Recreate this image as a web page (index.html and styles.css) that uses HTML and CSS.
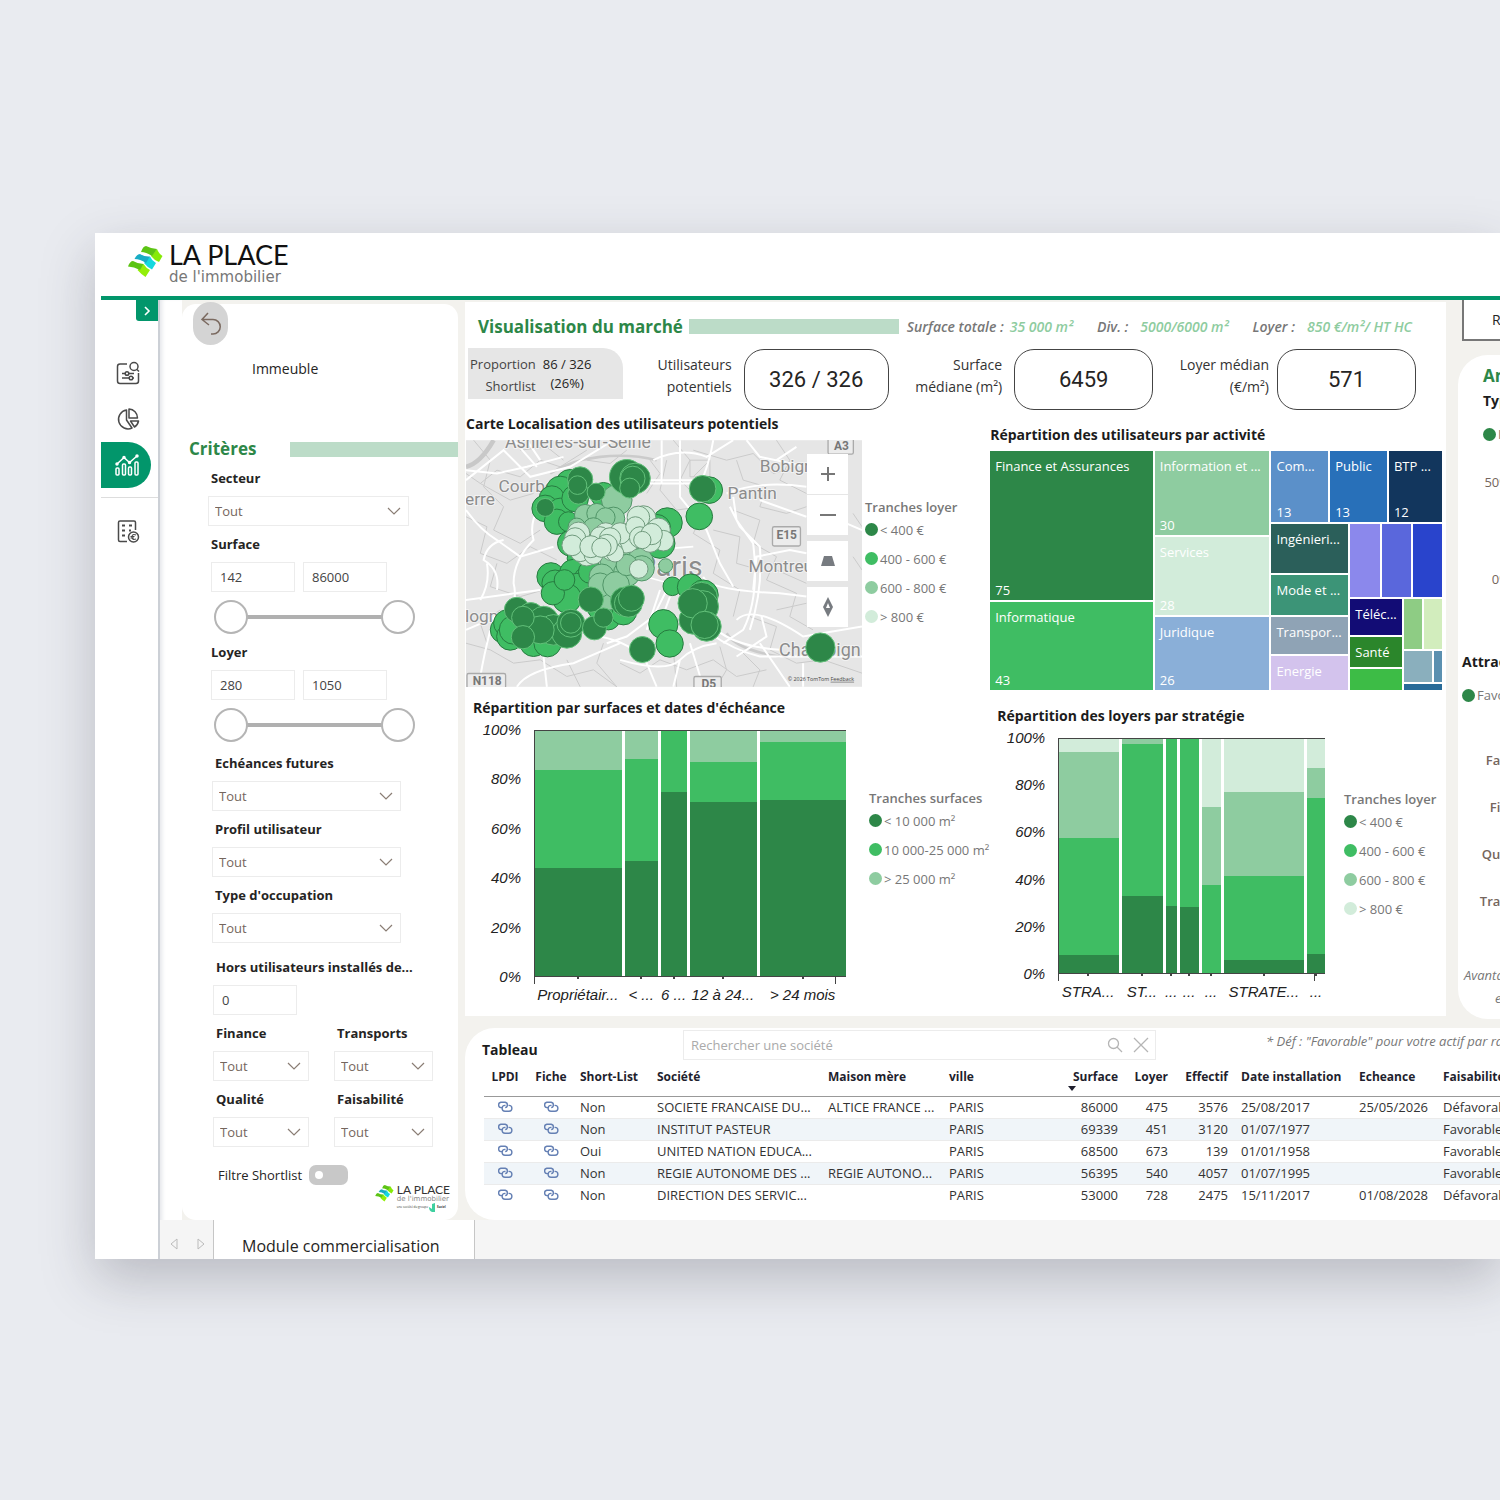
FILE: index.html
```html
<!DOCTYPE html>
<html lang="fr">
<head>
<meta charset="utf-8">
<meta name="viewport" content="width=device-width, initial-scale=1">
<title>La Place de l'immobilier - Module commercialisation</title>
<link rel="stylesheet" href="styles.css">
</head>
<body>
<svg class="defs" aria-hidden="true">
  <symbol id="mark" viewBox="0 0 35 32">
    <path d="M23 10L29 3Q31 8 34.500 10L31 16Q26 14 23 10Z" fill="#86ea08"/>
    <path d="M13 6Q15 0 18 0Q24 3 29 3L24 10Q18 6 13 6Z" fill="#5cc414"/>
    <path d="M16 17L22 10.500Q24 15 28 17L24 23.500Q19 21 16 17Z" fill="#14d8de"/>
    <path d="M6.500 13Q9 8 12 8Q17 11 22 10.500L18 17Q12 13 6.500 13Z" fill="#18acc4"/>
    <path d="M9.500 24L15.500 18Q18 22 22 24L17.500 31Q13 28 9.500 24Z" fill="#93ee08"/>
    <path d="M0 20.500Q2 15 5 15Q10 18 15.500 18L12 24Q6 20.500 0 20.500Z" fill="#5cc414"/>
  </symbol>
  <symbol id="chevron" viewBox="0 0 16 10"><path d="M2 2l6 6 6-6" fill="none" stroke="#8a7d74" stroke-width="1.2"/></symbol>
  <symbol id="link" viewBox="0 0 16 12">
    <g fill="none" stroke="#6580b4" stroke-width="1.400">
      <path d="M5 6.600H3.800A2.700 2.700 0 0 1 3.800 1.300H8.200A2.700 2.700 0 0 1 8.200 6.600"/>
      <path d="M11.500 4.400H12A2.900 2.900 0 0 1 12 10.200H8A2.900 2.900 0 0 1 8 4.400H8.500"/>
    </g>
  </symbol>
</svg>

<div class="window">
  <header class="header">
    <a class="logo" href="#">
      <svg class="logo-mark"><use href="#mark"/></svg>
      <span class="logo-text"><span class="logo-name">LA PLACE</span><span class="logo-tag">de l'immobilier</span></span>
    </a>
  </header>

  <div class="body">
    <nav class="rail">
      <button class="rail-toggle" aria-label="Déplier le menu"><svg width="8" height="12" viewBox="0 0 8 12"><path d="M2 2l4 4-4 4" fill="none" stroke="#fff" stroke-width="1.600"/></svg></button>
      <div class="rail-links">
        <a href="#" class="rail-link" aria-label="Recherche">
          <svg width="24" height="24" viewBox="0 0 24 24" fill="none" stroke="#4a4a4a" stroke-width="1.500"><path d="M11 3H4Q1.500 3 1.500 5.500V20Q1.500 22.500 4 22.500H20Q22.500 22.500 22.500 20V12"/><circle cx="18" cy="5.500" r="4"/><path d="M21 8.500l2 2M6 12.500h3m4 0h5M6 17h7m4 0h1"/><circle cx="11" cy="12.500" r="1.800"/><circle cx="15" cy="17" r="1.800"/></svg>
        </a>
        <a href="#" class="rail-link" aria-label="Statistiques">
          <svg width="24" height="24" viewBox="0 0 24 24" fill="none" stroke="#4a4a4a" stroke-width="1.500" stroke-linejoin="round"><path d="M10.500 3A9.500 9.500 0 1 0 16 21L10.500 13Z"/><path d="M13 2A9 9 0 0 1 21.500 11H13Z"/><path d="M14.500 14H22.500A9 9 0 0 1 18.500 20Z"/></svg>
        </a>
        <a href="#" class="rail-link active" aria-label="Marché">
          <svg width="24" height="24" viewBox="0 0 24 24" fill="none" stroke="#fff" stroke-width="1.500"><rect x="1" y="15" width="3" height="7" rx="1"/><rect x="7.500" y="11" width="3" height="11" rx="1"/><rect x="13.500" y="14" width="3" height="8" rx="1"/><rect x="20" y="9" width="3" height="13" rx="1"/><path d="M2 11L9 4.500L14.500 9.500L22 3"/><circle cx="2" cy="11" r="1" fill="#fff"/><circle cx="9" cy="4.500" r="1" fill="#fff"/><circle cx="14.500" cy="9.500" r="1" fill="#fff"/><circle cx="22" cy="3" r="1" fill="#fff"/></svg>
        </a>
        <hr class="rail-rule">
        <a href="#" class="rail-link" aria-label="Immeubles">
          <svg width="24" height="24" viewBox="0 0 24 24" fill="none" stroke="#4a4a4a" stroke-width="1.500"><path d="M19.500 11V3.500Q19.500 2 18 2H4Q2.500 2 2.500 3.500V21Q2.500 22.500 4 22.500H11"/><path d="M6 6.500h3m4 0h3M6 11.500h3m4 0h2M6 16.500h3" stroke-width="2"/><circle cx="17.500" cy="18" r="5"/><path d="M20 16Q16 14.500 16 18Q16 21.500 20 20M14.500 17.500h4M14.500 19h3.500" stroke-width="1.100"/></svg>
        </a>
      </div>
    </nav>

    <div class="content">
      <div class="canvas">
        <aside class="filters">
          <button class="undo" aria-label="Retour"><svg width="22" height="26" viewBox="0 0 22 26"><path d="M8 2L2 8.500L9 14M2 8.500H13A7 7 0 0 1 13 23H11" fill="none" stroke="#7b6a60" stroke-width="1.500"/></svg></button>
          <p class="asset">Immeuble</p>
          <div class="criteria"><h2 class="heading">Critères</h2><span class="band"></span></div>

          <div class="group group-a">
            <div class="field"><label for="f-sec">Secteur</label><span class="select"><select id="f-sec"><option>Tout</option></select><svg><use href="#chevron"/></svg></span></div>
            <div class="field">
              <label for="f-smin">Surface</label>
              <div class="pair"><input id="f-smin" value="142"><input aria-label="Surface maximale" value="86000"></div>
              <div class="range"><input type="range" min="142" max="86000" value="142" aria-label="Surface minimale"><input type="range" min="142" max="86000" value="86000" aria-label="Surface maximale"></div>
            </div>
            <div class="field">
              <label for="f-lmin">Loyer</label>
              <div class="pair"><input id="f-lmin" value="280"><input aria-label="Loyer maximal" value="1050"></div>
              <div class="range"><input type="range" min="280" max="1050" value="280" aria-label="Loyer minimal"><input type="range" min="280" max="1050" value="1050" aria-label="Loyer maximal"></div>
            </div>
          </div>

          <div class="group group-b">
            <div class="field"><label for="f-ech">Echéances futures</label><span class="select"><select id="f-ech"><option>Tout</option></select><svg><use href="#chevron"/></svg></span></div>
            <div class="field"><label for="f-pro">Profil utilisateur</label><span class="select"><select id="f-pro"><option>Tout</option></select><svg><use href="#chevron"/></svg></span></div>
            <div class="field"><label for="f-typ">Type d'occupation</label><span class="select"><select id="f-typ"><option>Tout</option></select><svg><use href="#chevron"/></svg></span></div>
          </div>

          <div class="group group-c">
            <div class="field wide"><label for="f-hor">Hors utilisateurs installés de...</label><div class="pair"><input id="f-hor" value="0"></div></div>
            <div class="field"><label for="f-fin">Finance</label><span class="select"><select id="f-fin"><option>Tout</option></select><svg><use href="#chevron"/></svg></span></div>
            <div class="field"><label for="f-tra">Transports</label><span class="select"><select id="f-tra"><option>Tout</option></select><svg><use href="#chevron"/></svg></span></div>
            <div class="field"><label for="f-qua">Qualité</label><span class="select"><select id="f-qua"><option>Tout</option></select><svg><use href="#chevron"/></svg></span></div>
            <div class="field"><label for="f-fai">Faisabilité</label><span class="select"><select id="f-fai"><option>Tout</option></select><svg><use href="#chevron"/></svg></span></div>
          </div>

          <div class="shortlist"><label for="f-short">Filtre Shortlist</label><input id="f-short" type="checkbox" class="switch"></div>

          <div class="mini-logo">
            <svg class="mini-mark"><use href="#mark"/></svg>
            <span class="mini-text"><span class="mini-name">LA PLACE</span><span class="mini-tag">de l'immobilier</span><span class="mini-group">une société du groupe<svg width="7" height="9" viewBox="0 0 7 9"><path d="M3 9V1L6 0V9ZM0 4l3 2v3Q0 8 0 4Z" fill="#3fd0a0"/></svg><b>Sociel</b></span></span>
          </div>
        </aside>

        <div class="stage">
          <div class="upper">
            <main class="panel">
              <div class="title-row">
                <h1 class="heading">Visualisation du marché</h1><span class="band"></span>
                <dl class="facts">
                  <div><dt>Surface totale :</dt><dd>35 000 m²</dd></div>
                  <div><dt>Div. :</dt><dd class="far">5000/6000 m²</dd></div>
                  <div><dt>Loyer :</dt><dd class="far">850 €/m²/ HT HC</dd></div>
                </dl>
              </div>

              <div class="kpis">
                <div class="proportion"><span class="prop-label">Proportion<br>Shortlist</span><span class="prop-value">86 / 326<br>(26%)</span></div>
                <div class="kpi"><span class="kpi-label">Utilisateurs<br>potentiels</span><output class="kpi-value broad">326 / 326</output></div>
                <div class="kpi"><span class="kpi-label">Surface<br>médiane (m²)</span><output class="kpi-value">6459</output></div>
                <div class="kpi tight"><span class="kpi-label">Loyer médian<br>(€/m²)</span><output class="kpi-value">571</output></div>
              </div>

              <div class="columns">
                <section class="col-left">
                  <h3>Carte Localisation des utilisateurs potentiels</h3>
                  <div class="viz-row map-row">
                    <div class="map">
                      <svg class="map-svg" viewBox="17 30 1190 741" role="img" aria-label="Carte de Paris">
                        <rect x="17" y="30" width="1190" height="741" fill="#e6e6e6"/>
                        <g fill="none" stroke="#cbcbcb" stroke-width="3">
                          <path d="M17 130L60 160L110 120L180 140L240 90L300 110L380 60M40 30L90 90L70 170L130 230L100 300L180 340L240 300M17 260L80 290L60 370L140 400L210 350L290 390M60 160L150 210L220 190M110 400L90 470L180 500L250 480M17 640L90 660L160 700L240 690L320 740L400 720L470 771"/>
                          <path d="M640 30L690 90L660 150L740 230L700 310L780 360L760 430L840 480L820 560M700 60L800 90L880 70L940 130L1010 110M620 90L600 180L650 240L720 230M820 240L900 270L880 340L950 380L920 450L1010 490L990 560L1060 600M760 300L840 320L830 400L900 420M870 560L950 590L930 660L1010 700L1090 690L1207 730"/>
                          <path d="M480 700L540 730L600 690L680 720L760 690L830 740L920 720M320 690L360 771M430 640L410 700L470 771M780 650L800 720L770 771M1180 250L1207 290M1180 380L1207 420M950 30L990 90L960 150L1040 190M830 90L850 150L920 170L900 230L980 250L1040 230M570 90L600 130L560 190M120 540L60 580L80 640M690 90h60v50h-60zM700 140l50-50M180 60L260 50L310 90M380 90L450 100L500 60M950 420L1040 460M950 540L1040 520M840 660L900 720L880 771M640 660L650 771M560 700L590 771"/>
                          <path d="M17 110Q60 100 100 30" stroke="#c8c8c8" stroke-width="14"/>
                          <path d="M270 130Q330 90 420 80T590 90" stroke-width="8"/><path d="M800 610Q830 660 960 680" stroke-width="8"/>
                        </g>
                        <g fill="none" stroke="#fff" stroke-width="6">
                          <path d="M17 240Q60 300 110 330L180 380L280 350M17 150L130 60L210 140L330 110L460 30M240 90L200 30M160 30L230 110M270 190Q200 260 220 330Q160 390 160 460Q180 540 100 560M17 120L110 130L200 110L310 80M80 400Q90 460 60 510M17 510L240 480M110 480Q120 420 70 390Q80 340 130 330"/>
                          <path d="M560 150H720M560 160H720M605 30V160M660 30V200L740 300L780 400L820 470M760 30Q750 90 730 140M580 90Q660 50 740 80L820 30M820 200L830 270L880 340Q900 500 850 600L790 640M810 230L840 290L900 350Q910 480 870 600M730 440Q740 480 960 490L1040 500M800 190Q900 150 1040 170M900 210L1040 260M880 480L890 380L990 360L1040 370"/>
                          <path d="M750 610Q820 660 900 680H1207M770 600Q830 650 960 660M770 640Q700 650 660 690T480 690M620 480L580 560L500 620L440 640M600 480L560 600M630 500L600 580M420 620Q520 640 560 700L590 771M250 680L260 771M90 600Q70 680 60 740M690 640L730 771M830 570Q880 520 1030 620L1207 590M905 560L920 620L830 680M1030 700V771M1207 300L1160 280M900 640L990 771M170 771Q200 720 340 700L480 640M860 30L900 80L1040 110M950 90L1010 50M17 600L110 560M660 690L640 771"/>
                          <path d="M440 200L640 410M330 380L700 350M520 430L700 480" stroke-width="5"/>
                        </g>
                        <g class="map-places">
                          <text x="134" y="53" font-size="53">Asnières-sur-Seine</text><text x="900" y="126" font-size="52">Bobigny</text>
                          <text x="115" y="187" font-size="52">Courbevoie</text><text x="14" y="226" font-size="52">erre</text><text x="803" y="208" font-size="52">Pantin</text>
                          <text x="535" y="437" font-size="85">Paris</text><text x="866" y="427" font-size="52">Montreuil</text><text x="14" y="577" font-size="52">logne</text><text x="958" y="678" font-size="54">Champign</text>
                        </g>
                        <g fill="#ececec" stroke="#aaa" stroke-width="4"><rect x="1105" y="10" width="76" height="62" rx="5"/><rect x="938" y="290" width="84" height="58" rx="5"/><rect x="20" y="731" width="116" height="60" rx="5"/><rect x="702" y="740" width="82" height="60" rx="5"/></g>
                        <g class="map-shields"><text x="1123" y="58">A3</text><text x="950" y="328">E15</text><text x="37" y="767">N118</text><text x="725" y="774">D5</text></g>
                        <g fill="#3fbd63" stroke="#267a3f" stroke-width="3">
                          <circle cx="330" cy="162" r="44"/><circle cx="300" cy="180" r="42"/><circle cx="275" cy="205" r="38"/><circle cx="255" cy="235" r="40"/><circle cx="300" cy="240" r="36"/><circle cx="290" cy="275" r="38"/><circle cx="345" cy="205" r="40"/><circle cx="325" cy="275" r="30"/><circle cx="430" cy="195" r="38"/><circle cx="410" cy="290" r="42"/>
                          <circle cx="622" cy="278" r="45"/><circle cx="590" cy="295" r="42"/><circle cx="600" cy="340" r="45"/><circle cx="330" cy="340" r="38"/><circle cx="355" cy="385" r="34"/><circle cx="272" cy="440" r="42"/><circle cx="285" cy="460" r="40"/><circle cx="340" cy="430" r="42"/><circle cx="380" cy="450" r="40"/><circle cx="350" cy="470" r="40"/><circle cx="320" cy="505" r="44"/><circle cx="278" cy="490" r="35"/><circle cx="313" cy="450" r="31"/><circle cx="390" cy="425" r="35"/>
                          <circle cx="748" cy="180" r="40"/><circle cx="718" cy="259" r="40"/><circle cx="637" cy="469" r="28"/><circle cx="692" cy="472" r="40"/><circle cx="730" cy="495" r="45"/><circle cx="610" cy="583" r="44"/><circle cx="629" cy="641" r="41"/>
                          <circle cx="130" cy="600" r="40"/><circle cx="140" cy="580" r="40"/><circle cx="150" cy="620" r="41"/><circle cx="160" cy="600" r="43"/><circle cx="220" cy="638" r="42"/><circle cx="262" cy="640" r="41"/><circle cx="445" cy="565" r="35"/><circle cx="490" cy="545" r="40"/><circle cx="420" cy="530" r="40"/>
                        </g>
                        <g fill="#8ecca0" stroke="#4f9466" stroke-width="3">
                          <circle cx="470" cy="210" r="46"/><circle cx="375" cy="255" r="32"/><circle cx="410" cy="250" r="30"/><circle cx="460" cy="265" r="34"/><circle cx="436" cy="262" r="29"/><circle cx="400" cy="295" r="32"/><circle cx="350" cy="290" r="26"/><circle cx="500" cy="380" r="40"/><circle cx="540" cy="395" r="40"/><circle cx="450" cy="400" r="30"/><circle cx="425" cy="440" r="38"/><circle cx="440" cy="500" r="42"/><circle cx="420" cy="465" r="36"/><circle cx="500" cy="430" r="40"/><circle cx="545" cy="415" r="38"/><circle cx="468" cy="465" r="40"/><circle cx="617" cy="407" r="21"/><circle cx="500" cy="405" r="32"/>
                        </g>
                        <g fill="#d2ecda" stroke="#6f9a7c" stroke-width="3">
                          <circle cx="550" cy="265" r="38"/><circle cx="535" cy="262" r="34"/><circle cx="355" cy="310" r="34"/><circle cx="345" cy="325" r="32"/><circle cx="437" cy="312" r="34"/><circle cx="420" cy="320" r="30"/><circle cx="498" cy="325" r="44"/><circle cx="480" cy="310" r="32"/><circle cx="595" cy="300" r="36"/><circle cx="610" cy="332" r="31"/><circle cx="570" cy="335" r="32"/><circle cx="526" cy="289" r="29"/><circle cx="540" cy="322" r="32"/><circle cx="575" cy="312" r="32"/><circle cx="380" cy="375" r="33"/><circle cx="360" cy="365" r="30"/><circle cx="455" cy="360" r="32"/><circle cx="465" cy="370" r="26"/><circle cx="336" cy="346" r="31"/><circle cx="400" cy="375" r="28"/><circle cx="450" cy="325" r="32"/><circle cx="440" cy="345" r="32"/><circle cx="392" cy="350" r="33"/><circle cx="424" cy="353" r="29"/><circle cx="547" cy="330" r="26"/><circle cx="536" cy="417" r="28"/>
                        </g>
                        <g fill="#2d8748" stroke="#62c079" stroke-width="3">
                          <circle cx="360" cy="148" r="38"/><circle cx="355" cy="190" r="32"/><circle cx="352" cy="165" r="28"/><circle cx="408" cy="186" r="27"/><circle cx="255" cy="232" r="27"/><circle cx="500" cy="140" r="52"/><circle cx="525" cy="145" r="46"/><circle cx="518" cy="145" r="37"/><circle cx="509" cy="174" r="30"/><circle cx="728" cy="176" r="40"/>
                          <circle cx="170" cy="540" r="38"/><circle cx="212" cy="558" r="40"/><circle cx="250" cy="575" r="46"/><circle cx="280" cy="600" r="46"/><circle cx="320" cy="610" r="45"/><circle cx="240" cy="600" r="42"/><circle cx="188" cy="563" r="34"/><circle cx="188" cy="622" r="35"/><circle cx="332" cy="580" r="42"/><circle cx="332" cy="579" r="31"/><circle cx="392" cy="509" r="38"/><circle cx="403" cy="594" r="36"/><circle cx="430" cy="563" r="29"/><circle cx="495" cy="515" r="44"/><circle cx="505" cy="520" r="42"/><circle cx="514" cy="505" r="39"/>
                          <circle cx="725" cy="505" r="48"/><circle cx="728" cy="530" r="48"/><circle cx="700" cy="570" r="43"/><circle cx="740" cy="590" r="44"/><circle cx="698" cy="520" r="44"/><circle cx="734" cy="585" r="41"/><circle cx="547" cy="659" r="39"/><circle cx="1082" cy="653" r="44"/>
                        </g>
                        <text class="map-credit" x="984" y="753">© 2026 TomTom <tspan text-decoration="underline">Feedback</tspan></text>
                      </svg>
                      <div class="map-tools">
                        <div class="map-zoom">
                          <button aria-label="Zoom avant"><svg width="18" height="18" viewBox="0 0 18 18"><path d="M9 2v14M2 9h14" stroke="#777" stroke-width="2"/></svg></button>
                          <button aria-label="Zoom arrière"><svg width="18" height="18" viewBox="0 0 18 18"><path d="M1 9h16" stroke="#777" stroke-width="2"/></svg></button>
                        </div>
                        <button aria-label="Inclinaison"><svg width="16" height="12" viewBox="0 0 16 12"><path d="M4 1h8l3 10H1z" fill="#777b80"/></svg></button>
                        <button aria-label="Boussole"><svg width="12" height="20" viewBox="0 0 12 20"><path d="M6 0L11 10L6 20L1 10Z" fill="#777b80"/><path d="M6 6L8 11H4Z" fill="#fff"/></svg></button>
                      </div>
                    </div>
                    <div class="legend"><strong>Tranches loyer</strong><ul><li class="c1">&lt; 400 €</li><li class="c2">400 - 600 €</li><li class="c3">600 - 800 €</li><li class="c4">&gt; 800 €</li></ul></div>
                  </div>

                  <h3 class="inset">Répartition par surfaces et dates d'échéance</h3>
                  <div class="viz-row chart-row">
                    <div class="chart">
                      <div class="y-axis"><span>100%</span><span>80%</span><span>60%</span><span>40%</span><span>20%</span><span>0%</span></div>
                      <div class="plot">
                        <div class="bar" style="flex-grow:88"><i class="c3" style="flex-grow:160"></i><i class="c2" style="flex-grow:400"></i><i class="c1" style="flex-grow:440"></i></div>
                        <div class="bar" style="flex-grow:33"><i class="c3" style="flex-grow:115"></i><i class="c2" style="flex-grow:415"></i><i class="c1" style="flex-grow:470"></i></div>
                        <div class="bar" style="flex-grow:26"><i class="c2" style="flex-grow:250"></i><i class="c1" style="flex-grow:750"></i></div>
                        <div class="bar" style="flex-grow:67"><i class="c3" style="flex-grow:125"></i><i class="c2" style="flex-grow:163"></i><i class="c1" style="flex-grow:712"></i></div>
                        <div class="bar" style="flex-grow:87"><i class="c3" style="flex-grow:45"></i><i class="c2" style="flex-grow:235"></i><i class="c1" style="flex-grow:720"></i></div>
                      </div>
                      <div class="x-axis"><span style="flex-grow:88">Propriétair...</span><span style="flex-grow:33">&lt; ...</span><span style="flex-grow:26">6 ...</span><span style="flex-grow:67">12 à 24...</span><span style="flex-grow:87">&gt; 24 mois</span></div>
                    </div>
                    <div class="legend"><strong>Tranches surfaces</strong><ul><li class="c1">&lt; 10 000 m²</li><li class="c2">10 000-25 000 m²</li><li class="c3">&gt; 25 000 m²</li></ul></div>
                  </div>
                </section>

                <section class="col-right">
                  <h3>Répartition des utilisateurs par activité</h3>
                  <div class="treemap">
                    <div class="stack" style="flex-grow:163"><div class="tile t1" style="flex-grow:150"><span>Finance et Assurances</span><span>75</span></div><div class="tile t2" style="flex-grow:86"><span>Informatique</span><span>43</span></div></div>
                    <div class="stack" style="flex-grow:115"><div class="tile t3" style="flex-grow:84"><span>Information et ...</span><span>30</span></div><div class="tile t4" style="flex-grow:78"><span>Services</span><span>28</span></div><div class="tile t5" style="flex-grow:72"><span>Juridique</span><span>26</span></div></div>
                    <div class="stack" style="flex-grow:171">
                      <div class="strip" style="flex-grow:71"><div class="tile t6" style="flex-grow:57"><span>Com...</span><span>13</span></div><div class="tile t7" style="flex-grow:57"><span>Public</span><span>13</span></div><div class="tile t8" style="flex-grow:53"><span>BTP ...</span><span>12</span></div></div>
                      <div class="strip" style="flex-grow:165">
                        <div class="stack" style="flex-grow:77"><div class="tile t9" style="flex-grow:50"><span>Ingénieri...</span></div><div class="tile t10" style="flex-grow:40"><span>Mode et ...</span></div><div class="tile t11" style="flex-grow:36"><span>Transpor...</span></div><div class="tile t12" style="flex-grow:33"><span>Energie</span></div></div>
                        <div class="stack" style="flex-grow:92">
                          <div class="strip" style="flex-grow:72"><div class="tile t13"></div><div class="tile t14"></div><div class="tile t15"></div></div>
                          <div class="strip" style="flex-grow:90">
                            <div class="stack" style="flex-grow:52"><div class="tile t16" style="flex-grow:35"><span>Téléc...</span></div><div class="tile t17" style="flex-grow:28"><span>Santé</span></div><div class="tile t18" style="flex-grow:23"></div></div>
                            <div class="stack" style="flex-grow:38"><div class="strip" style="flex-grow:49"><div class="tile t19"></div><div class="tile t20"></div></div><div class="strip" style="flex-grow:31"><div class="tile t21" style="flex-grow:28"></div><div class="tile t22" style="flex-grow:8"></div></div><div class="tile t23" style="flex-grow:6"></div></div>
                          </div>
                        </div>
                      </div>
                    </div>
                  </div>

                  <h3 class="inset">Répartition des loyers par stratégie</h3>
                  <div class="viz-row chart-row">
                    <div class="chart">
                      <div class="y-axis"><span>100%</span><span>80%</span><span>60%</span><span>40%</span><span>20%</span><span>0%</span></div>
                      <div class="plot">
                        <div class="bar" style="flex-grow:60"><i class="c4" style="flex-grow:55"></i><i class="c3" style="flex-grow:370"></i><i class="c2" style="flex-grow:500"></i><i class="c1" style="flex-grow:75"></i></div>
                        <div class="bar" style="flex-grow:42"><i class="c3" style="flex-grow:20"></i><i class="c2" style="flex-grow:652"></i><i class="c1" style="flex-grow:328"></i></div>
                        <div class="bar" style="flex-grow:11"><i class="c2" style="flex-grow:715"></i><i class="c1" style="flex-grow:285"></i></div>
                        <div class="bar" style="flex-grow:19"><i class="c2" style="flex-grow:720"></i><i class="c1" style="flex-grow:280"></i></div>
                        <div class="bar" style="flex-grow:19"><i class="c4" style="flex-grow:290"></i><i class="c3" style="flex-grow:335"></i><i class="c2" style="flex-grow:375"></i></div>
                        <div class="bar" style="flex-grow:81"><i class="c4" style="flex-grow:228"></i><i class="c3" style="flex-grow:358"></i><i class="c2" style="flex-grow:358"></i><i class="c1" style="flex-grow:56"></i></div>
                        <div class="bar" style="flex-grow:18"><i class="c4" style="flex-grow:125"></i><i class="c3" style="flex-grow:125"></i><i class="c2" style="flex-grow:667"></i><i class="c1" style="flex-grow:83"></i></div>
                      </div>
                      <div class="x-axis"><span style="flex-grow:60">STRA...</span><span style="flex-grow:42">ST...</span><span style="flex-grow:11">...</span><span style="flex-grow:19">...</span><span style="flex-grow:19">...</span><span style="flex-grow:81">STRATE...</span><span style="flex-grow:18">...</span></div>
                    </div>
                    <div class="legend"><strong>Tranches loyer</strong><ul><li class="c1">&lt; 400 €</li><li class="c2">400 - 600 €</li><li class="c3">600 - 800 €</li><li class="c4">&gt; 800 €</li></ul></div>
                  </div>
                </section>
              </div>
            </main>

            <aside class="side">
              <button class="side-button">Retour</button>
              <div class="side-card">
                <h2 class="heading">Analyse</h2>
                <h3>Type</h3>
                <div class="key">Indifférent</div>
                <div class="scale"><span>50%</span><span>0%</span></div>
                <h3 class="outdent">Attractivité</h3>
                <div class="key outdent">Favorable</div>
                <div class="scores"><span>Fa...</span><span>Fi...</span><span>Qu...</span><span>Tra...</span></div>
                <p class="side-note">Avantages<br><span>et</span></p>
              </div>
            </aside>
          </div>

          <section class="table-panel">
            <div class="table-head">
              <h3>Tableau</h3>
              <div class="search"><input type="search" placeholder="Rechercher une société" aria-label="Rechercher une société">
                <button aria-label="Rechercher"><svg width="16" height="16" viewBox="0 0 16 16" fill="none" stroke="#b5b5b5" stroke-width="1.300"><circle cx="6.500" cy="6.500" r="5"/><path d="M10 10l5 5"/></svg></button>
                <button aria-label="Effacer"><svg width="16" height="16" viewBox="0 0 16 16" stroke="#b5b5b5" stroke-width="1.300"><path d="M1 1l14 14M15 1L1 15"/></svg></button></div>
              <p class="note">* Déf : "Favorable" pour votre actif par rapport</p>
            </div>
            <table>
              <colgroup><col class="w1"><col class="w2"><col class="w3"><col class="w4"><col class="w5"><col class="w6"><col class="w7"><col class="w8"><col class="w9"><col class="w10"><col class="w11"><col></colgroup>
              <thead><tr><th class="mid">LPDI</th><th class="mid">Fiche</th><th>Short-List</th><th>Société</th><th>Maison mère</th><th>ville</th><th class="num sorted">Surface</th><th class="num">Loyer</th><th class="num">Effectif</th><th class="date">Date installation</th><th>Echeance</th><th>Faisabilité</th></tr></thead>
              <tbody>
                <tr><td class="mid"><a href="#" aria-label="LPDI"><svg><use href="#link"/></svg></a></td><td class="mid"><a href="#" aria-label="Fiche"><svg><use href="#link"/></svg></a></td><td>Non</td><td>SOCIETE FRANCAISE DU...</td><td>ALTICE FRANCE ...</td><td>PARIS</td><td class="num">86000</td><td class="num">475</td><td class="num">3576</td><td class="date">25/08/2017</td><td>25/05/2026</td><td>Défavorable</td></tr>
                <tr><td class="mid"><a href="#" aria-label="LPDI"><svg><use href="#link"/></svg></a></td><td class="mid"><a href="#" aria-label="Fiche"><svg><use href="#link"/></svg></a></td><td>Non</td><td>INSTITUT PASTEUR</td><td></td><td>PARIS</td><td class="num">69339</td><td class="num">451</td><td class="num">3120</td><td class="date">01/07/1977</td><td></td><td>Favorable</td></tr>
                <tr><td class="mid"><a href="#" aria-label="LPDI"><svg><use href="#link"/></svg></a></td><td class="mid"><a href="#" aria-label="Fiche"><svg><use href="#link"/></svg></a></td><td>Oui</td><td>UNITED NATION EDUCA...</td><td></td><td>PARIS</td><td class="num">68500</td><td class="num">673</td><td class="num">139</td><td class="date">01/01/1958</td><td></td><td>Favorable</td></tr>
                <tr><td class="mid"><a href="#" aria-label="LPDI"><svg><use href="#link"/></svg></a></td><td class="mid"><a href="#" aria-label="Fiche"><svg><use href="#link"/></svg></a></td><td>Non</td><td>REGIE AUTONOME DES ...</td><td>REGIE AUTONO...</td><td>PARIS</td><td class="num">56395</td><td class="num">540</td><td class="num">4057</td><td class="date">01/07/1995</td><td></td><td>Favorable</td></tr>
                <tr><td class="mid"><a href="#" aria-label="LPDI"><svg><use href="#link"/></svg></a></td><td class="mid"><a href="#" aria-label="Fiche"><svg><use href="#link"/></svg></a></td><td>Non</td><td>DIRECTION DES SERVIC...</td><td></td><td>PARIS</td><td class="num">53000</td><td class="num">728</td><td class="num">2475</td><td class="date">15/11/2017</td><td>01/08/2028</td><td>Défavorable</td></tr>
              </tbody>
            </table>
          </section>
        </div>
      </div>

      <footer class="tabs">
        <button aria-label="Page précédente"><svg width="8" height="12" viewBox="0 0 8 12"><path d="M7 1v10L1 6z" fill="none" stroke="#bbb"/></svg></button>
        <button aria-label="Page suivante"><svg width="8" height="12" viewBox="0 0 8 12"><path d="M1 1v10l6-5z" fill="none" stroke="#bbb"/></svg></button>
        <a href="#" class="tab">Module commercialisation</a>
      </footer>
    </div>
  </div>
</div>
</body>
</html>
```
FILE: styles.css
```css
:root {
  --c1: #2d8748;
  --c2: #3fbd63;
  --c3: #8ecca0;
  --c4: #d2ecda;
  --brand: #02966b;
  --band: #bcdcc8;
  --beige: #f3f2ee;
  --line: #ececec;
}
* { box-sizing: border-box; }
body {
  margin: 0;
  padding: 233px 0 120px 95px;
  min-height: 100vh;
  overflow-x: hidden;
  background: #e9ebf0;
  color: #252423;
  font: 13px/20px "Open Sans", "Noto Sans", sans-serif;
}
h1, h2, h3, p, dl, dd, ul { margin: 0; padding: 0; }
ul { list-style: none; }
button, input, select { font: inherit; color: inherit; border: 0; background: none; padding: 0; margin: 0; }
h3 { font-size: 14px; line-height: 20px; font-weight: 700; color: #1c1c1c; white-space: nowrap; }
.defs { display: none; }
.heading { font-size: 17px; line-height: 24px; font-weight: 700; color: #2d8748; white-space: nowrap; }
.band { flex: 1; height: 15px; background: var(--band); }

.window { background: #fff; box-shadow: 0 20px 50px rgba(50, 50, 65, .26); }
.header { margin-left: 6px; padding: 9px 27px 10px; border-bottom: 4px solid var(--brand); }
.logo { display: flex; align-items: center; gap: 6px; height: 44px; color: #111; text-decoration: none; }
.logo-mark { width: 35px; height: 32px; margin-top: -4px; }
.logo-text { display: flex; flex-direction: column; }
.logo-name { font: 27px/26px Lato, sans-serif; }
.logo-tag { font: 15px/18px "DejaVu Sans", sans-serif; color: #777; }

.body { display: flex; padding-left: 6px; }
.rail { flex: 0 0 57px; display: flex; flex-direction: column; }
.rail-toggle { align-self: flex-end; display: grid; place-items: center; width: 22px; height: 21px; background: var(--brand); border-radius: 0 0 0 3px; }
.rail-links { display: flex; flex-direction: column; margin-top: 29px; }
.rail-link { display: grid; place-items: center; width: 53px; height: 46px; }
.rail-link.active { width: 50px; background: var(--brand); border-radius: 0 23px 23px 0; padding-left: 2px; }
.rail-rule { width: 100%; margin: 9px 0 10px; border: 0; border-top: 1px solid #ddd; }

.content { flex: 1; min-width: 0; border-left: 2px solid #ccd0d6; box-shadow: inset 4px 0 4px -2px #e4e6ea; }
.canvas { display: flex; gap: 7px; margin-left: 22px; background: var(--beige); }

.filters { flex: 0 0 276px; margin-top: 4px; background: #fff; border-radius: 14px; }
.undo { display: grid; place-items: center; width: 35px; height: 43px; margin: -2px 0 0 11px; background: #d4d4d4; border-radius: 18px; }
.asset { margin: 14px 0 0 70px; font-size: 14px; }
.criteria { display: flex; align-items: center; justify-content: space-between; gap: 34px; padding-left: 7px; margin-top: 58px; }
.group { display: grid; gap: 8px; }
.group-a { margin: 7px 49px 0 26px; }
.group-b { margin: 11px 57px 0 30px; }
.group-c { margin: 14px 25px 0 31px; grid-template-columns: 96px 99px; justify-content: space-between; }
.wide { grid-column: 1 / -1; }
.field { display: flex; flex-direction: column; gap: 8px; min-width: 0; }
.field label { padding-left: 3px; font-weight: 700; white-space: nowrap; }
.select { display: grid; grid-template-columns: 1fr 16px 6px; align-items: center; height: 30px; border: 1px solid var(--line); }
.select select { grid-area: 1 / 1 / 2 / 4; appearance: none; width: 100%; height: 28px; padding-left: 6px; color: #75665d; }
.select svg { grid-area: 1 / 2; width: 16px; height: 10px; pointer-events: none; }
.pair { display: flex; gap: 8px; }
.group-a .pair { padding-left: 3px; }
.pair input { width: 84px; height: 30px; padding-left: 8px; border: 1px solid var(--line); color: #444; }
.range { display: grid; align-items: center; height: 34px; margin: 0 -6px 0 6px; background: linear-gradient(#b0b0b0, #b0b0b0) center / calc(100% - 60px) 4px no-repeat; }
.range input { grid-area: 1 / 1; appearance: none; width: 100%; height: 34px; pointer-events: none; }
.range input::-webkit-slider-thumb { appearance: none; width: 34px; height: 34px; background: #fff; border: 2px solid #b5b5b5; border-radius: 50%; pointer-events: auto; }
.shortlist { display: flex; align-items: center; gap: 7px; padding: 18px 0 0 36px; }
.switch { appearance: none; width: 39px; height: 20px; padding: 6px; background: #c8c8c8; border-radius: 7px; }
.switch::before { content: ""; display: block; width: 8px; height: 8px; background: #fff; border-radius: 50%; }
.mini-logo { display: flex; justify-content: flex-end; gap: 3px; padding: 0 8px 8px 0; }
.mini-mark { width: 19px; height: 17px; }
.mini-text { display: flex; flex-direction: column; color: #333; }
.mini-name { font: 12px/10px Lato, sans-serif; }
.mini-tag { font: 7px/8px "DejaVu Sans", sans-serif; color: #888; }
.mini-group { display: flex; align-items: center; gap: 1px; font: 3px/9px "Open Sans", sans-serif; }

.stage { flex: 1; min-width: 0; }
.upper { display: flex; gap: 12px; }
.panel { flex: 1; min-width: 0; margin: 2px 0 3px; background: #fff; }
.title-row { display: flex; align-items: center; gap: 6px; height: 46px; padding: 3px 34px 0 13px; }
.facts { display: flex; gap: 24px; padding-left: 2px; font-weight: 600; font-style: italic; white-space: nowrap; font-size: 14px; }
.facts div { display: flex; gap: 6px; }
.facts dt { color: #777; }
.facts dd { color: var(--c3); }
.facts .far { padding-left: 6px; }
.kpis { display: flex; justify-content: space-between; padding: 0 30px 0 3px; }
.proportion { display: flex; gap: 7px; width: 155px; height: 51px; margin-right: 8px; padding: 5px 2px; background: #e6e6e6; border-radius: 0 20px 0 0; text-align: right; white-space: nowrap; }
.prop-label { line-height: 22px; color: #444; }
.prop-value { text-align: center; line-height: 19px; padding-top: 2px; }
.kpi { display: flex; align-items: flex-start; gap: 12px; padding-top: 1px; }
.kpi.tight { gap: 8px; }
.kpi-label { padding-top: 5px; font-size: 14px; line-height: 22px; text-align: right; white-space: nowrap; color: #333; }
.kpi-value { display: grid; place-items: center; width: 139px; height: 61px; border: 1px solid #444; border-radius: 20px; font: 22px/26px Roboto, sans-serif; white-space: nowrap; }
.kpi-value.broad { width: 145px; }

.columns { display: flex; }
.col-left { flex: 0 0 522px; padding: 4px 0 0 1px; }
.col-right { flex: 1; min-width: 0; padding: 15px 4px 0 1px; }
.viz-row { display: flex; }
.map-row { gap: 3px; margin: 6px 0 11px; }
.map { position: relative; flex: 0 0 396px; height: 247px; overflow: hidden; }
.map-svg { display: block; width: 100%; height: 100%; }
.map-places { font-family: Roboto, sans-serif; fill: #8c8c8c; stroke: #f2f2f2; stroke-width: 6px; paint-order: stroke; }
.map-shields { font: 700 36px Roboto, sans-serif; fill: #777; }
.map-credit { font: 16px "Open Sans", sans-serif; fill: #444; }
.map-tools { position: absolute; top: 14px; right: 14px; display: grid; gap: 6px; width: 41px; }
.map-tools button { display: grid; place-items: center; width: 41px; height: 40px; background: #fff; }
.map-zoom { display: grid; gap: 1px; background: #e6e6e6; }
.legend { flex: 0 0 100px; padding-top: 57px; color: #777; white-space: nowrap; }
.legend strong { display: block; font-weight: 600; }
.legend ul { margin-top: -2px; }
.legend li { display: flex; align-items: center; gap: 2px; height: 29px; }
.legend li::before, .key::before { content: ""; width: 13px; height: 13px; border-radius: 50%; }
.legend .c1::before, .key::before { background: var(--c1); }
.legend .c2::before { background: var(--c2); }
.legend .c3::before { background: var(--c3); }
.legend .c4::before { background: var(--c4); }

.inset { padding-left: 7px; }
.chart-row { padding: 12px 0 0 7px; }
.chart { display: grid; grid-template-columns: 48px 1fr; column-gap: 13px; flex: 0 0 373px; font: italic 15px/20px "Liberation Sans", sans-serif; color: #222; }
.chart-row .legend { padding: 58px 0 0 23px; }
.y-axis { display: flex; flex-direction: column; justify-content: space-between; align-items: flex-end; margin: -10px 0; }
.plot { display: flex; gap: 3px; height: 247px; border: solid #444; border-width: 1px 0 1px 1px; }
.bar { display: flex; flex-direction: column; flex-basis: 0; }
.bar i { flex-basis: 0; }
.bar .c1 { background: var(--c1); }
.bar .c2 { background: var(--c2); }
.bar .c3 { background: var(--c3); }
.bar .c4 { background: var(--c4); }
.x-axis { grid-column: 2; display: flex; gap: 3px; background: linear-gradient(#444, #444) 0 0 / 1px 7px no-repeat, linear-gradient(#444, #444) calc(100% - 10px) 0 / 1px 7px no-repeat; }
.x-axis span { display: flex; justify-content: center; flex-basis: 0; min-width: 0; padding-top: 8px; white-space: nowrap; background: linear-gradient(#444, #444) 50% 0 / 2px 2px no-repeat; }

.treemap { display: flex; gap: 2px; height: 239px; margin: 6px 0 16px; }
.stack, .strip { display: flex; gap: 2px; flex-basis: 0; min-width: 0; min-height: 0; }
.stack { flex-direction: column; }
.tile { display: flex; flex-direction: column; justify-content: space-between; flex: 1 1 0; min-width: 0; min-height: 0; overflow: hidden; padding: 5px 0 0 5px; color: #fff; line-height: 20px; white-space: nowrap; }
.tile:empty { padding: 0; }
.t1 { background: #2d8748; } .t2 { background: #3fbd63; } .t3 { background: #8ecca0; } .t4 { background: #d2ecda; }
.t5 { background: #8aafd8; } .t6 { background: #5b90c9; } .t7 { background: #2870b9; } .t8 { background: #12365d; }
.t9 { background: #2b5f5a; } .t10 { background: #3c9477; } .t11 { background: #8fa3b5; } .t12 { background: #d3c3ed; }
.t13 { background: #8b88ec; } .t14 { background: #5a67dc; } .t15 { background: #2944cc; } .t16 { background: #120c75; }
.t17 { background: #2b862b; } .t18 { background: #3dbc46; } .t19 { background: #8ecc84; } .t20 { background: #d2edbd; }
.t21 { background: #8aafbd; } .t22 { background: #5b90b0; } .t23 { background: #286b98; }
.col-right .chart { flex: 1; }
.col-right .plot { height: 236px; }
.col-right .chart-row .legend { flex-basis: 117px; padding: 51px 0 0 19px; }

.side { flex: 0 0 42px; min-width: 0; white-space: nowrap; }
.side-button { width: 120px; height: 41px; margin-left: 4px; padding-left: 28px; border: 2px solid #777; border-top: 0; background: #fff; font-size: 14px; text-align: left; }
.side-card { width: 300px; height: 664px; margin-top: 14px; padding: 9px 0 0 25px; background: #fff; border-radius: 30px; }
.side-card h3 { margin-top: 3px; }
.key { display: flex; align-items: center; gap: 2px; margin-top: 13px; color: #777; }
.scale { display: flex; flex-direction: column; gap: 77px; width: 27px; margin: 28px 0 63px; text-align: right; color: #75665d; }
.outdent { margin-left: -21px; }
.scores { display: flex; flex-direction: column; gap: 27px; width: 28px; margin-top: 45px; align-items: flex-end; font-weight: 600; color: #75665d; }
.side-note { margin: 53px 0 0 -19px; line-height: 23px; font-style: italic; color: #777; }
.side-note span { padding-left: 31px; }

.table-panel { margin-top: 9px; height: 192px; padding: 2px 0 0 19px; background: #fff; border-radius: 30px 0 0 30px; overflow: hidden; }
.table-head { display: grid; grid-template-columns: 199px 473px 1fr; align-items: start; }
.table-head h3 { padding-top: 10px; margin-left: -2px; }
.search { display: flex; align-items: center; gap: 10px; height: 30px; padding: 0 6px 0 7px; border: 1px solid var(--line); }
.search input { flex: 1; min-width: 0; height: 28px; outline: 0; }
.search input::placeholder { color: #aaa; opacity: 1; }
.search button { display: grid; }
.note { padding: 1px 0 0 110px; font-style: italic; color: #777; white-space: nowrap; }
table { width: 100%; table-layout: fixed; border-collapse: collapse; margin-top: 4px; font-size: 13px; }
.w1 { width: 42px; } .w2 { width: 50px; } .w3 { width: 77px; } .w4 { width: 171px; } .w5 { width: 121px; } .w6 { width: 100px; }
.w7 { width: 77px; } .w8 { width: 50px; } .w9 { width: 60px; } .w10 { width: 123px; } .w11 { width: 84px; }
th, td { padding: 0 4px; text-align: left; white-space: nowrap; }
th { height: 32px; vertical-align: top; padding-top: 3px; font-size: 12px; line-height: 20px; font-weight: 700; color: #1f1f2e; border-bottom: 1px solid #999; }
td { height: 22px; line-height: 20px; color: #333; border-bottom: 1px solid #ebebeb; }
tbody tr:nth-child(even) { background: #f0f5f9; }
tbody tr:last-child td { border: 0; }
.mid { text-align: center; padding: 0; }
th.mid { padding-top: 3px; }
.mid a, .mid svg { display: block; width: 16px; height: 12px; margin: 0 auto; }
.num { text-align: right; }
.date { padding-left: 9px; }
.sorted::after { content: ""; display: block; width: 0; margin: -1px 0 0 19px; border: 4px solid transparent; border-top: 5px solid #1f1f2e; border-bottom: 0; }

.tabs { display: flex; height: 39px; background: #f5f5f5; }
.tabs button { width: 27px; padding-top: 10px; }
.tab { margin-left: -1px; padding: 14px 34px 0 28px; background: #fff; border: solid #c6c6c6; border-width: 0 1px; font-size: 16px; line-height: 24px; color: #252423; text-decoration: none; white-space: nowrap; }
```
